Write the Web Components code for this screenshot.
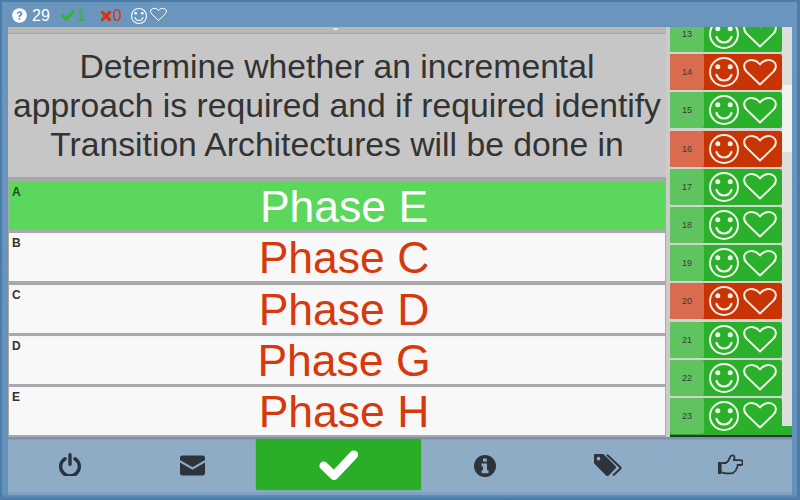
<!DOCTYPE html>
<html><head><meta charset="utf-8"><style>
html,body{margin:0;padding:0;width:800px;height:500px;overflow:hidden;background:#6592bb}
</style></head><body>
<quiz-app></quiz-app>
<script>
const ICON={
smile:`<svg viewBox="0 0 30 30" width="100%" height="100%" fill="none" stroke="currentColor"><circle cx="15" cy="15" r="14" stroke-width="2"/><circle cx="8.800" cy="9.800" r="2.500" fill="currentColor" stroke="none"/><circle cx="21.200" cy="9.800" r="2.500" fill="currentColor" stroke="none"/><path d="M7.500 18c1.500 3.800 4.300 5.500 7.500 5.500s6-1.700 7.500-5.500" stroke-width="2.200" stroke-linecap="round"/></svg>`,
heart:`<svg viewBox="0 0 34 27" width="100%" height="100%" fill="none" stroke="currentColor"><path d="M17 25.500 3.600 12.600C.2 9.200.4 4.500 3.600 2.500 7.500 0 13.500.8 17 5.500 20.500.8 26.500 0 30.400 2.500 33.600 4.500 33.800 9.200 30.400 12.600Z" stroke-width="2" stroke-linejoin="round"/></svg>`,
q:`<svg viewBox="0 0 16 16" width="100%" height="100%"><circle cx="8" cy="8" r="7.800" fill="currentColor"/><path d="M5 6.200c.2-1.700 1.400-2.700 3.100-2.700 1.800 0 3 1.100 3 2.500 0 2.200-2.300 2-2.300 3.500H6.900c0-2.500 2-2.300 2-3.500 0-.6-.4-1-.9-1-.6 0-1 .4-1.100 1.100Zm1.900 4.400h1.900v1.900H6.900Z" fill="#6592bb"/></svg>`,
check:`<svg viewBox="0 0 40 31" width="100%" height="100%"><path d="M4.700 15.700 15 25.800 34.800 4.700" fill="none" stroke="currentColor" stroke-width="8.600" stroke-linecap="round" stroke-linejoin="round"/></svg>`,
cross:`<svg viewBox="0 0 14 14" width="100%" height="100%"><path d="M2.800 2.800l8.400 8.400M11.200 2.800l-8.400 8.400" fill="none" stroke="currentColor" stroke-width="3.800" stroke-linecap="round"/></svg>`,
power:`<svg viewBox="0 0 22 23" width="100%" height="100%"><path d="M6 5.800a9.300 9.300 0 1 0 10 0" fill="none" stroke="currentColor" stroke-width="3.400" stroke-linecap="round"/><path d="M11 1.700v9.500" fill="none" stroke="currentColor" stroke-width="3.400" stroke-linecap="round"/></svg>`,
mail:`<svg viewBox="0 0 26 21" width="100%" height="100%"><path d="M2.500 0h21A2.500 2.500 0 0 1 26 2.500v2.200L13 12.200 0 4.700V2.500A2.500 2.500 0 0 1 2.500 0ZM0 7.500 13 15 26 7.500v11a2.500 2.500 0 0 1-2.500 2.500h-21A2.500 2.500 0 0 1 0 18.500Z" fill="currentColor"/></svg>`,
info:`<svg viewBox="0 0 22 22" width="100%" height="100%"><circle cx="11" cy="11" r="11" fill="currentColor"/><path d="M9 3.400h3.800v3.200H9ZM7.600 8.400h5.400v6.800h1.500v3H7.600v-3H9v-3.800H7.600Z" fill="#8fadc7"/></svg>`,
tags:`<svg viewBox="0 0 28 22" width="100%" height="100%"><path fill-rule="evenodd" d="M1 0H8.500c.6 0 1.200.3 1.600.7L21.500 12c.8.8.8 1.800 0 2.600l-6.800 6.800c-.8.8-1.800.8-2.600 0L.7 10C.3 9.600 0 9 0 8.400V1C0 .4.400 0 1 0ZM4.500 2.800a1.800 1.800 0 1 0 .01 0Z" fill="currentColor"/><path d="M13 .8 26.200 13.200c.5.500.5 1.100 0 1.600L19 21.500" fill="none" stroke="currentColor" stroke-width="1.900"/></svg>`,
hand:`<svg viewBox="0 0 25 21" width="100%" height="100%"><path d="M0 8h3.600v12H0Z" fill="currentColor"/><path d="M3.600 9H8c2-1.200 3.200-3.400 4.200-6.200.6-1.800 4.200-2.200 4.300.6 0 1-.2 1.800-.7 2.800h7c2.500 0 2.500 4.800 0 4.800h-3.300c.3 2-.4 3.400-1.200 4-.1 1.300-1 2.600-2.300 3-.3 1-1 1.400-2.300 1.400H8c-1.800 0-2.800-1-4.400-1" fill="none" stroke="currentColor" stroke-width="1.800" stroke-linejoin="round"/></svg>`
};
class BaseEl extends HTMLElement{
  render(css,html){const r=this.shadowRoot||this.attachShadow({mode:'open'});r.innerHTML=`<style>${css}</style>${html}`;}
}
class UiIcon extends BaseEl{connectedCallback(){
  this.render(`:host{display:block;flex:none;width:${this.getAttribute('w')}px;height:${this.getAttribute('h')}px;color:${this.getAttribute('c')||'inherit'}}svg{display:block}`,ICON[this.getAttribute('name')]);
}}
class StatusBar extends BaseEl{connectedCallback(){
  this.render(`:host{display:flex;align-items:center;height:25px;box-sizing:border-box;padding:2px 0 0 10px;color:#fff;font:16px "Liberation Sans",sans-serif;flex:none}
  span{display:block;line-height:20px}.a{margin-left:5px}.g{color:#30b52c;margin-left:2px}.r{color:#d03a10;margin-left:1px}`,
  `<ui-icon name="q" w="15" h="15"></ui-icon><span class="a">29</span>
   <ui-icon name="check" w="14" h="11" c="#30b52c" style="margin-left:11px"></ui-icon><span class="g">1</span>
   <ui-icon name="cross" w="12" h="12" c="#d8340e" style="margin-left:14px"></ui-icon><span class="r">0</span>
   <ui-icon name="smile" w="16" h="16" style="margin-left:9px"></ui-icon>
   <ui-icon name="heart" w="17" h="15" style="margin-left:3px;margin-top:-2px"></ui-icon>`);
}}
class QuestionBox extends BaseEl{connectedCallback(){
  this.render(`:host{display:flex;flex:none;position:relative;align-items:center;justify-content:center;height:155px;box-sizing:border-box;padding-top:7px;border-bottom:5px solid #a8a8a8;background:linear-gradient(#bab8b2 0 6px,#a6a6a6 6px 7px,#c6c6c6 7px);color:#333;font:33.700px/39px "Liberation Sans",sans-serif;text-align:center;white-space:nowrap}
  i{position:absolute;left:325px;top:1px;width:5px;height:2px;border-radius:2px;background:#e4e4e0}`,`<i></i><div><slot></slot></div>`);
}}
class AnswerRow extends BaseEl{connectedCallback(){
  const sel=this.hasAttribute('selected');
  this.render(`:host{display:block;flex:none;position:relative;height:48px;margin:0 1px 3.250px;box-sizing:border-box;padding-left:14px;background:${sel?'#5ad75c':'linear-gradient(#f0f4f8,#f8f8f8 4px)'};color:${sel?'#fff':'#d6390c'};text-align:center;font:44.500px/50px "Liberation Sans",sans-serif;white-space:nowrap}
  b{position:absolute;left:3px;top:4px;font:bold 12px/13px "Liberation Sans",sans-serif;color:${sel?'#1f4a22':'#333'}}`,`<b>${this.getAttribute('k')}</b><slot></slot>`);
}}
class ScoreRow extends BaseEl{connectedCallback(){
  const bad=this.hasAttribute('bad');
  this.render(`:host{display:flex;flex:none;height:36px;margin-bottom:2.200px;background:${bad?'#c93405':'#2bb02c'};color:#fff;border-radius:2px;overflow:hidden}
  .n{width:34px;background:${bad?'#d96b4e':'#5fc35f'};color:#3a3a3a;font:9px/36px "Liberation Sans",sans-serif;text-align:center;border-radius:2px;flex:none}
  .i{display:flex;align-items:center;padding-left:5px;gap:4px;color:${bad?'#fbeee4':'#f0fbea'}}`,
  `<div class="n">${this.getAttribute('n')}</div><div class="i"><ui-icon name="smile" w="30" h="30"></ui-icon><ui-icon name="heart" w="34" h="27"></ui-icon></div>`);
}}
class ScoreList extends BaseEl{connectedCallback(){
  const bad=[14,16,20];let rows='';
  for(let n=13;n<=23;n++)rows+=`<score-row n="${n}" ${bad.includes(n)?'bad':''}></score-row>`;
  this.render(`:host{display:grid;grid-template-columns:112px 10px;grid-template-rows:399px 8px 3px;flex:none;width:122px;height:410px;background:#d2d2d2;overflow:hidden}
  .list{grid-row:1/3;grid-column:1;display:flex;flex-direction:column;margin-top:-11px;min-height:0;background:linear-gradient(transparent calc(100% - 6px),#2bb02c 0)}
  .track{grid-row:1;grid-column:2;background:#dedede;position:relative}
  .thumb{position:absolute;left:0;top:58px;width:10px;height:67px;background:#f2f2f2}
  .foot{grid-row:2;grid-column:2;background:#2bb02c}
  .edge{grid-row:3;grid-column:1/3;background:linear-gradient(#2bb02c 0 1.500px,#27342f 1.500px)}`,
  `<div class="list">${rows}</div><div class="track"><div class="thumb"></div></div><div class="foot"></div><div class="edge"></div>`);
}}
class NavButton extends BaseEl{connectedCallback(){
  const p=this.hasAttribute('primary');
  this.render(`:host{display:flex;align-items:center;justify-content:center;box-sizing:border-box;height:51px;padding-top:${this.getAttribute('pt')||0}px;${p?'flex:none;width:165px;margin:0 2px;background:#2aae28;border-radius:2px;box-shadow:0 0 1px #2f7d30;color:#fff;':'flex:1 1 0;color:#2d333b;'}}`,`<slot></slot>`);
}}
class NavBar extends BaseEl{connectedCallback(){
  this.render(`:host{display:flex;flex:none;height:58px;box-sizing:border-box;padding-top:2px;background:linear-gradient(#7a93aa 0 2px,#8eacc6 3px,#8eacc6 55px,#7ea2c1 55px);align-items:flex-start}`,`<slot></slot>`);
}}
class QuizApp extends BaseEl{connectedCallback(){
  this.render(`:host{display:flex;flex-direction:column;width:800px;height:500px;box-sizing:border-box;border-top:2px solid #4c7ca8;border-left:2px solid #4c7ca8;border-right:3px solid #4c7ca8;background:linear-gradient(#6a96be,#6592bb 430px,#6592bb 492px,#3d6d9a 500px);font-family:"Liberation Sans",sans-serif}
  .frame{flex:none;display:flex;flex-direction:column;margin:0 5px 0 6px;background:#c8c8c8}
  .main{display:flex;height:410px;flex:none;gap:4px;background:#cbcbcb}
  .left{flex:none;width:658px;height:410px;display:flex;flex-direction:column;background:#a9a9a9}`,
  `<status-bar></status-bar>
  <div class="frame"><div class="main">
    <div class="left">
      <question-box>Determine whether an incremental<br>approach is required and if required identify<br>Transition Architectures will be done in</question-box>
      <answer-row k="A" selected>Phase E</answer-row>
      <answer-row k="B">Phase C</answer-row>
      <answer-row k="C">Phase D</answer-row>
      <answer-row k="D">Phase G</answer-row>
      <answer-row k="E">Phase H</answer-row>
    </div>
    <score-list></score-list>
  </div>
  <nav-bar>
    <nav-button><ui-icon name="power" w="22" h="23"></ui-icon></nav-button>
    <nav-button pt="2"><ui-icon name="mail" w="25" h="21"></ui-icon></nav-button>
    <nav-button primary pt="1"><ui-icon name="check" w="40" h="31"></ui-icon></nav-button>
    <nav-button pt="2"><ui-icon name="info" w="22" h="22"></ui-icon></nav-button>
    <nav-button><ui-icon name="tags" w="28" h="22"></ui-icon></nav-button>
    <nav-button><ui-icon name="hand" w="25" h="21"></ui-icon></nav-button>
  </nav-bar></div>`);
}}
customElements.define('ui-icon',UiIcon);
customElements.define('status-bar',StatusBar);
customElements.define('question-box',QuestionBox);
customElements.define('answer-row',AnswerRow);
customElements.define('score-row',ScoreRow);
customElements.define('score-list',ScoreList);
customElements.define('nav-button',NavButton);
customElements.define('nav-bar',NavBar);
customElements.define('quiz-app',QuizApp);
</script></body></html>
